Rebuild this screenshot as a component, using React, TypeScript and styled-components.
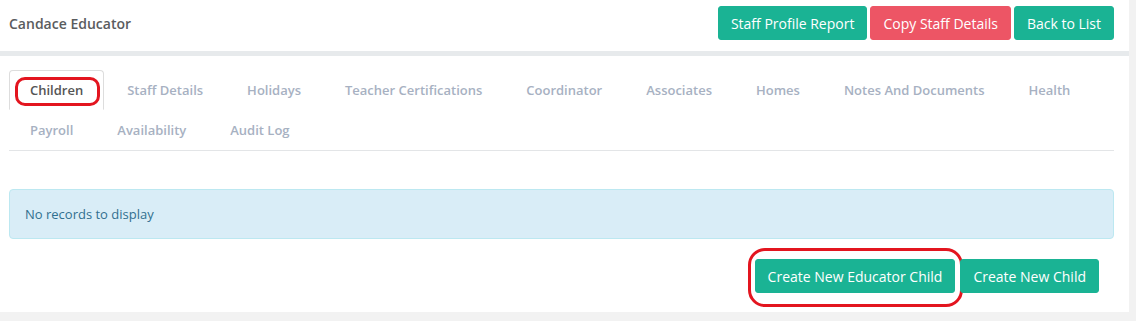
import React from "react";
import styled, { createGlobalStyle } from "styled-components";

const GlobalStyle = createGlobalStyle`
  body {
    margin: 0;
    background: #f2f2f2;
    font-family: "Open Sans", "Liberation Sans", sans-serif;
  }
`;

const Page = styled.div`
  width: 1129px;
`;

const Header = styled.div`
  display: flex;
  align-items: center;
  justify-content: space-between;
  height: 34px;
  padding: 6px 15px 11px 9px;
  background: #ffffff;
  border-bottom: 5px solid #e7eaec;
`;

const Title = styled.h2`
  margin: 0;
  font-size: 14px;
  font-weight: 600;
  color: #5a5c5e;
`;

const ButtonGroup = styled.div`
  display: flex;
  gap: ${(p: { gap: number }) => p.gap}px;
`;

const Button = styled.button<{ danger?: boolean }>`
  position: relative;
  height: 34px;
  padding: 0 12px;
  border: 1px solid ${(p) => (p.danger ? "#ed5565" : "#1ab394")};
  border-radius: 3px;
  background: ${(p) => (p.danger ? "#ed5565" : "#1ab394")};
  color: #ffffff;
  font-family: "Open Sans", "Liberation Sans", sans-serif;
  font-size: 14px;
  cursor: pointer;
`;

const Card = styled.div`
  background: #ffffff;
  padding: 14px 15px 19px 9px;
`;

const TabList = styled.ul`
  display: flex;
  flex-wrap: wrap;
  list-style: none;
  margin: 0;
  padding: 0;
  border-bottom: 1px solid #e3e5e7;
`;

const Tab = styled.li<{ active?: boolean }>`
  position: relative;
  margin: 0 2px 0 0;
  padding: 10px 20px;
  line-height: 18px;
  font-size: 13px;
  font-weight: 600;
  color: ${(p) => (p.active ? "#555555" : "#a7b1c2")};
  border: 1px solid ${(p) => (p.active ? "#dddddd" : "transparent")};
  border-bottom-color: transparent;
  border-radius: 4px 4px 0 0;
  background: ${(p) => (p.active ? "#ffffff" : "transparent")};
  cursor: pointer;
`;

const Alert = styled.div`
  margin-top: 38px;
  height: 48px;
  display: flex;
  align-items: center;
  padding: 0 15px;
  background: #d9edf7;
  border: 1px solid #bce8f1;
  border-radius: 4px;
  color: #31708f;
  font-size: 13px;
`;

const Actions = styled.div`
  display: flex;
  justify-content: flex-end;
  margin: 20px 15px 0 0;
`;

const Marker = styled.span<{ top: number; left: number; w: number; h: number; r: number }>`
  position: absolute;
  top: ${(p) => p.top}px;
  left: ${(p) => p.left}px;
  width: ${(p) => p.w}px;
  height: ${(p) => p.h}px;
  box-sizing: border-box;
  border: 3.5px solid #e3151f;
  border-radius: ${(p) => p.r}px;
  pointer-events: none;
`;

const tabs = [
  "Children",
  "Staff Details",
  "Holidays",
  "Teacher Certifications",
  "Coordinator",
  "Associates",
  "Homes",
  "Notes And Documents",
  "Health",
  "Payroll",
  "Availability",
  "Audit Log",
];

const App = () => {
  return (
    <Page>
      <GlobalStyle />
      <Header>
        <Title>Candace Educator</Title>
        <ButtonGroup gap={3}>
          <Button>Staff Profile Report</Button>
          <Button danger>Copy Staff Details</Button>
          <Button>Back to List</Button>
        </ButtonGroup>
      </Header>
      <Card>
        <TabList>
          {tabs.map((t, i) => (
            <Tab key={t} active={i === 0}>
              {t}
              {i === 0 && <Marker top={6} left={5} w={85} h={29} r={10} />}
            </Tab>
          ))}
        </TabList>
        <Alert>No records to display</Alert>
        <Actions>
          <ButtonGroup gap={5}>
            <Button>
              Create New Educator Child
              <Marker top={-12} left={-8} w={215} h={59} r={17} />
            </Button>
            <Button>Create New Child</Button>
          </ButtonGroup>
        </Actions>
      </Card>
    </Page>
  );
};

export default App;
